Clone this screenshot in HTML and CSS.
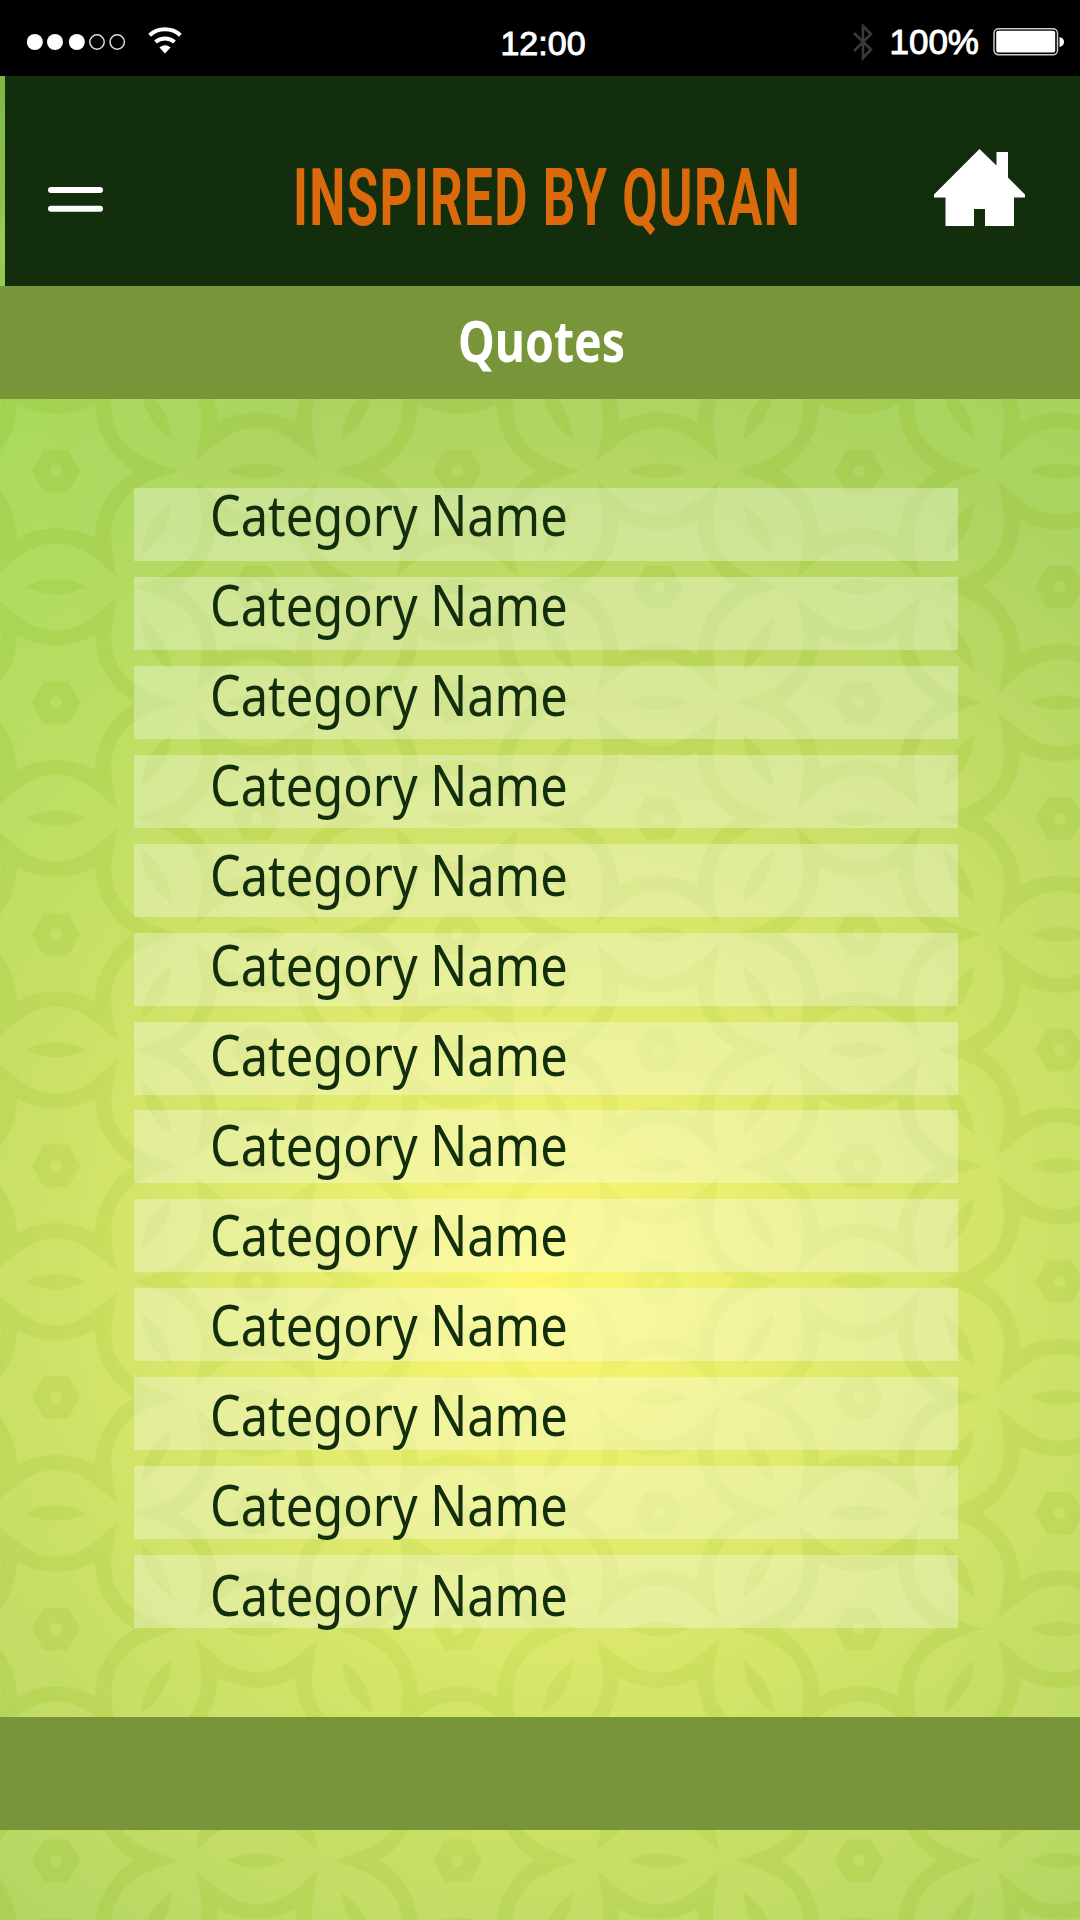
FILE: index.html
```html
<!DOCTYPE html>
<html lang="en">
<head>
<meta charset="utf-8">
<title>Inspired by Quran</title>
<link rel="stylesheet" href="styles.css">
</head>
<body>
<div class="screen">
  <svg class="ornament" viewBox="0 0 1080 1920" aria-hidden="true">
    <defs>
      <path id="lens" d="M-30 0Q0 -14.8 30 0Q0 14.8 -30 0Z"/>
      <g id="motif">
        <path fill-rule="evenodd" d="M61.2 106.1C40 87.8 24 72.3 0 72.3C-24 72.3 -40 87.8 -61.2 106.1C-56 78.5 -50.6 56.9 -62.6 36.1C-74.6 15.4 -96 9.3 -122.5 0C-96 -9.3 -74.6 -15.4 -62.6 -36.1C-50.6 -56.9 -56 -78.5 -61.2 -106.1C-40 -87.8 -24 -72.3 0 -72.3C24 -72.3 40 -87.8 61.2 -106.1C56 -78.5 50.6 -56.9 62.6 -36.1C74.6 -15.4 96 -9.3 122.5 0C96 9.3 74.6 15.4 62.6 36.1C50.6 56.9 56 78.5 61.2 106.1ZM39 67.5A79 79 0 0 0 -39 67.5A79 79 0 0 0 -78 0A79 79 0 0 0 -39 -67.5A79 79 0 0 0 39 -67.5A79 79 0 0 0 78 0A79 79 0 0 0 39 67.5Z"/>
        <path fill-rule="evenodd" d="M24.4 0L12.2 21.1H-12.2L-24.4 0L-12.2 -21.1H12.2ZM6 0A6 6 0 1 0 -6 0A6 6 0 1 0 6 0Z"/>
        <use href="#lens" y="115.8"/>
        <use href="#lens" y="-115.8"/>
        <use href="#lens" transform="rotate(60) translate(0 115.8)"/>
        <use href="#lens" transform="rotate(120) translate(0 115.8)"/>
        <use href="#lens" transform="rotate(240) translate(0 115.8)"/>
        <use href="#lens" transform="rotate(300) translate(0 115.8)"/>
      </g>
      <pattern id="lattice" width="401.4" height="231.6" patternUnits="userSpaceOnUse" patternTransform="translate(56 471)">
        <use href="#motif"/>
        <use href="#motif" x="401.4"/>
        <use href="#motif" y="231.6"/>
        <use href="#motif" x="401.4" y="231.6"/>
        <use href="#motif" x="200.7" y="115.8"/>
      </pattern>
    </defs>
    <rect width="1080" height="1920" fill="url(#lattice)"/>
  </svg>

  <div class="status">
    <svg class="signal" width="160" height="36" viewBox="0 0 160 36">
      <g fill="#fff"><circle cx="7.8" cy="18" r="8"/><circle cx="28" cy="18" r="8"/><circle cx="49.8" cy="18" r="8"/></g>
      <g fill="none" stroke="#ddd" stroke-width="1.5"><circle cx="70" cy="18" r="7.2"/><circle cx="90.2" cy="18" r="7.2"/></g>
      <g fill="none" stroke="#fff" stroke-width="4"><path d="M122.6 11.2A23 23 0 0 1 153.4 11.2"/><path d="M128.5 18A14.5 14.5 0 0 1 147.500 18"/></g>
      <path fill="#fff" d="M138 29.500L132.400 23.500Q138 18.800 143.600 23.500Z"/>
    </svg>
    <span class="clock">12:00</span>
    <div class="power">
      <svg width="20" height="38" viewBox="0 0 20 38" fill="none" stroke="#3a3a3a" stroke-width="2.600"><path d="M1 10L18 26.500L10 35V3L18 11L1 28"/></svg>
      <span class="percent">100%</span>
      <svg class="battery" width="72" height="28" viewBox="0 0 72 28">
        <rect x="1" y=".7" width="63.500" height="26" rx="4.500" fill="none" stroke="#ccc" stroke-width="1.500"/>
        <rect x="3.200" y="2.800" width="59" height="21.800" rx="2" fill="#fff"/>
        <path fill="#fff" d="M66.500 9Q71 10 71 14T66.500 19Z"/>
      </svg>
    </div>
  </div>

  <header class="topbar">
    <svg class="menu" width="55" height="26" viewBox="0 0 55 26" stroke="#fff" stroke-width="6" stroke-linecap="round"><path d="M3 4H52M3 22.700H52"/></svg>
    <h1 class="brand"><span class="brand-text">INSPIRED BY QURAN</span></h1>
    <svg class="home" width="91" height="77" viewBox="0 0 91 77"><path fill="#fff" d="M45.500 0L62.500 16.500V3H74V28.500L91 45.500V48.500H80V77H51V60H40V77H11.500V48.500H0V45.500Z"/></svg>
  </header>

  <div class="section"><h2 class="section-text">Quotes</h2></div>

  <main class="content">
    <div class="bars">
      <i></i><i></i><i></i><i></i><i></i><i></i><i></i><i></i><i></i><i></i><i></i><i></i><i></i>
    </div>
    <ul class="names">
      <li><span>Category Name</span></li>
      <li><span>Category Name</span></li>
      <li><span>Category Name</span></li>
      <li><span>Category Name</span></li>
      <li><span>Category Name</span></li>
      <li><span>Category Name</span></li>
      <li><span>Category Name</span></li>
      <li><span>Category Name</span></li>
      <li><span>Category Name</span></li>
      <li><span>Category Name</span></li>
      <li><span>Category Name</span></li>
      <li><span>Category Name</span></li>
      <li><span>Category Name</span></li>
    </ul>
  </main>

  <footer class="bottom"></footer>
</div>
</body>
</html>
```
FILE: styles.css
```css
* { box-sizing: border-box; margin: 0; padding: 0; }

.screen {
  position: relative;
  isolation: isolate;
  width: 1080px;
  height: 1920px;
  overflow: hidden;
  display: flex;
  flex-direction: column;
  background:
    radial-gradient(ellipse 300px 480px at 0 580px, rgba(180, 236, 96, .36), rgba(180, 236, 96, 0)),
    radial-gradient(circle 1340px at 545px 1285px,
      #fffa6e 0, #f8f671 60px, #e8ee6e 215px, #d8e66a 385px, #cae067 545px,
      #bfdb65 700px, #aed461 885px, #a6d45d 1020px, #7cb84a 1340px);
  font-family: "Noto Sans", "Open Sans", sans-serif;
}

.ornament {
  position: absolute;
  inset: 0;
  z-index: -1;
  fill: #84b010;
  opacity: .15;
  mask-image: radial-gradient(circle at 545px 1285px, rgba(0, 0, 0, .25) 0, rgba(0, 0, 0, .75) 400px, #000 700px);
}

.status {
  height: 76px;
  flex: none;
  display: grid;
  grid-template-columns: 1fr auto 1fr;
  align-items: center;
  padding: 9px 15px 0 27px;
  background: #000;
  color: #fff;
  font: 34px/1 "Liberation Sans", Arial, sans-serif;
  -webkit-text-stroke: 1px #fff;
}
.signal { margin-top: -1px; }
.clock { margin-left: -6px; }
.power { display: flex; align-items: center; justify-content: flex-end; margin-top: -2px; }
.percent { font-size: 35px; margin: 0 14px 0 16px; }

.topbar {
  height: 210px;
  flex: none;
  margin-left: 5px;
  padding: 73px 55px 0 43px;
  display: flex;
  align-items: flex-start;
  background: #122e0d;
}
.menu { margin-top: 37px; }
.brand {
  flex: 1;
  padding-left: 190px;
  font: 700 80px/98px Roboto, sans-serif;
  color: #db6a0d;
}
.brand-text {
  display: inline-block;
  white-space: nowrap;
  letter-spacing: 2px;
  transform: scaleX(.64);
  transform-origin: 0 0;
  width: 500px;
}

.section {
  height: 113px;
  flex: none;
  display: flex;
  justify-content: center;
  align-items: center;
  padding: 0 0 6px 4px;
  background: #78953a;
}
.section-text { font-size: 57px; line-height: 80px; color: #fff; transform: scaleX(.815); }

.content {
  height: 1318px;
  flex: none;
  display: grid;
  padding: 89px 122px 0 134px;
  align-items: start;
}
.bars, .names { grid-area: 1 / 1; }
.bars { display: grid; gap: 16px; }
.bars i { height: 73px; background: rgba(255, 255, 255, .32); }
.bars i:nth-child(8) { margin-top: -1px; }
.names { list-style: none; padding-left: 76px; margin-top: -19px; color: #122e0d; }
.names li { height: 90px; line-height: 90px; font-size: 56px; white-space: nowrap; }
.names span { display: inline-block; transform: scaleX(.87); transform-origin: 0 0; }

.bottom { height: 113px; flex: none; background: #78953a; }
```
